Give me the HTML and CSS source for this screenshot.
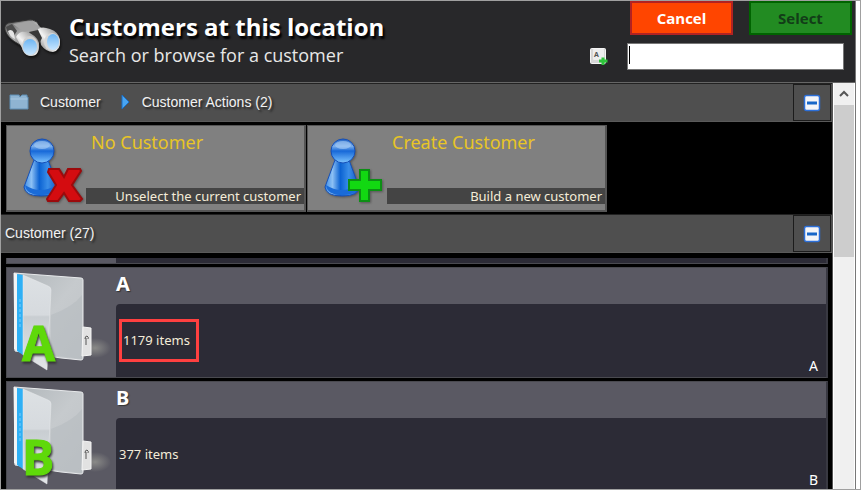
FILE: index.html
```html
<!DOCTYPE html>
<html lang="en">
<head>
    <meta charset="UTF-8">
    <meta name="viewport" content="width=device-width, initial-scale=1.0">
    <title>Customers at this location</title>
    <link rel="stylesheet" href="styles.css">
</head>
<body>
    <!-- Shared gradients and shapes -->
    <svg class="defs" width="0" height="0" aria-hidden="true">
        <defs>
            <linearGradient id="metal" x1="0" y1="0" x2="1" y2="1">
                <stop offset="0" stop-color="#555"/>
                <stop offset="0.5" stop-color="#b0b0b0"/>
                <stop offset="1" stop-color="#5c5c5c"/>
            </linearGradient>
            <linearGradient id="barrel" x1="0" y1="1" x2="1" y2="0">
                <stop offset="0" stop-color="#666"/>
                <stop offset="0.45" stop-color="#f4f4f4"/>
                <stop offset="1" stop-color="#777"/>
            </linearGradient>
            <linearGradient id="lens" x1="0" y1="0" x2="0" y2="1">
                <stop offset="0" stop-color="#6db5f2"/>
                <stop offset="1" stop-color="#c8e6ff"/>
            </linearGradient>
            <linearGradient id="pawnBody" x1="0" y1="0" x2="1" y2="0">
                <stop offset="0" stop-color="#3f8ee6"/>
                <stop offset="0.22" stop-color="#8cc0f4"/>
                <stop offset="0.45" stop-color="#0b62d2"/>
                <stop offset="0.7" stop-color="#3a8ee8"/>
                <stop offset="1" stop-color="#1453c0"/>
            </linearGradient>
            <linearGradient id="pawnHead" x1="0" y1="0" x2="0" y2="1">
                <stop offset="0" stop-color="#1f62c4"/>
                <stop offset="0.3" stop-color="#7db0ec"/>
                <stop offset="0.5" stop-color="#1668d8"/>
                <stop offset="1" stop-color="#7cc4ff"/>
            </linearGradient>
            <linearGradient id="folderBack" x1="0" y1="0" x2="1" y2="1">
                <stop offset="0" stop-color="#b0b6ba"/>
                <stop offset="0.5" stop-color="#c6cacd"/>
                <stop offset="1" stop-color="#bfc3c7"/>
            </linearGradient>
            <linearGradient id="folderFront" x1="0" y1="0" x2="0" y2="1">
                <stop offset="0" stop-color="#dde1e4"/>
                <stop offset="0.42" stop-color="#d6dade"/>
                <stop offset="0.44" stop-color="#c9ced2"/>
                <stop offset="1" stop-color="#e2e5e8"/>
            </linearGradient>
            <radialGradient id="folderShade">
                <stop offset="0" stop-color="#8a8a88"/>
                <stop offset="1" stop-color="#8a8a88" stop-opacity="0"/>
            </radialGradient>
            <symbol id="pawn" viewBox="0 0 64 72">
                <path d="M14 29 H28 L38 56 Q38 65 21 65 Q5 65 4 56 Z" fill="url(#pawnBody)" stroke="#1650b8"/>
                <path d="M5 54 Q20 64 37 54 Q37 64 21 64 Q6 64 5 54" fill="#1a6bd8"/>
                <circle cx="22" cy="20" r="12" fill="url(#pawnHead)" stroke="#1650b8"/>
                <ellipse cx="22" cy="14" rx="8" ry="4" fill="#a9cdf5" opacity="0.6"/>
            </symbol>
            <symbol id="folder" viewBox="0 0 104 108">
                <ellipse cx="88" cy="79" rx="16" ry="10" fill="url(#folderShade)"/>
                <path d="M7 4 L74 9 Q76 9 76 11 V89 Q76 91 74 91 L54 89 L8 82 Z" fill="url(#folderBack)" stroke="#e8eaec"/>
                <path d="M44 46 Q66 38 75 26 V90 L44 86 Z" fill="#b4b9bd" opacity="0.5"/>
                <path d="M76 58 L84 59 V86 L75 87 Z" fill="#e2e2e2" stroke="#f5f5f5"/>
                <path d="M78 70 Q78 67 80 67 Q82 68 81 70 M79 69 V76" fill="none" stroke="#555"/>
                <path d="M7 4 L11 5 V83 L7 80 Z" fill="#f2f4f5"/>
                <path d="M10 5 L16 6 V86 L10 82 Z" fill="#2fb0f5"/>
                <path d="M13 30 V58" stroke="#7cccfb" stroke-dasharray="3 2"/>
                <path d="M16 6 L41 17 Q44 18 44 21 L40 101 L16 86 Z" fill="url(#folderFront)" stroke="#e9ebed" stroke-width="0.500"/>
            </symbol>
            <symbol id="minus" viewBox="0 0 18 18">
                <rect x="1.5" y="1.5" width="15" height="15" rx="2" fill="#f4f5f8" stroke="#2c6fd8" stroke-width="1.5"/>
                <rect x="4" y="7.5" width="10" height="3" fill="#1766c8"/>
            </symbol>
        </defs>
    </svg>

    <div class="window">
        <div class="app">
            <header class="header">
                <svg class="logo" viewBox="0 0 60 42" aria-hidden="true">
                    <path d="M1 12 Q0 7 4 5 L24 2 Q29 1 33 4 L38 12 L16 27 Q3 20 1 12 Z" fill="url(#metal)" stroke="#333"/>
                    <path d="M9 6 L26 3 L38 10 L20 14 Z" fill="#a2a2a2"/>
                    <path d="M2 9 L8 6 L13 13 L9 19 Q3 15 2 9 Z" fill="#4a4a4a"/>
                    <path d="M4 13 Q8 10 10 15 L11 21 Q5 18 4 13 Z" fill="#e5e5e5"/>
                    <path d="M34 11 Q38 8 46 11 Q55 14 56 22 Q57 32 49 34 Q42 34 37 27 Z" fill="url(#barrel)"/>
                    <path d="M25 14 L34 12 L38 20 L35 26 Z" fill="#383838"/>
                    <path d="M12 19 Q15 13 22 14 Q33 17 35 25 Q36 38 27 38 Q20 37 18 30 Z" fill="url(#barrel)"/>
                    <ellipse cx="48" cy="24" rx="8" ry="9" fill="#d8d8d8"/>
                    <ellipse cx="49" cy="24" rx="6" ry="8" fill="url(#lens)"/>
                    <ellipse cx="26" cy="28" rx="8" ry="10" fill="#d0d0d0"/>
                    <ellipse cx="26" cy="29" rx="7" ry="8" fill="url(#lens)"/>
                </svg>
                <div class="heading">
                    <h1>Customers at this location</h1>
                    <p>Search or browse for a customer</p>
                </div>
                <div class="tools">
                    <div class="buttons">
                        <button class="btn btn-cancel" type="button">Cancel</button>
                        <button class="btn btn-select" type="button">Select</button>
                    </div>
                    <div class="search">
                        <button class="key" type="button" aria-label="Keyboard">
                            <svg viewBox="0 0 18 18">
                                <rect x="0.5" y="0.5" width="15" height="15" rx="1" fill="#d6d6d6" stroke="#f4f4f4"/>
                                <rect x="3" y="1" width="11" height="11" rx="1" fill="#eee"/>
                                <text x="4" y="9" font-size="7" font-weight="bold" fill="#555">A</text>
                                <path d="M11.5 9.5 h3 v2 h3 v3 h-3 v2.5 h-3 v-2.5 h-2.5 v-3 h2.5 Z" fill="#2fc53c"/>
                            </svg>
                        </button>
                        <input type="text" aria-label="Search customers">
                    </div>
                </div>
            </header>

            <div class="content">
                <main class="main">
                    <div class="bar">
                        <nav class="crumbs">
                            <svg class="crumb-folder" viewBox="0 0 20 16" aria-hidden="true">
                                <path d="M1 1 H10 L11 3 L13 1 H18 V3 H19 V15 H1 Z" fill="#8fb4d2" stroke="#5f8fb5"/>
                                <path d="M1.5 5 H18.5" stroke="#a9c8e0"/>
                            </svg>
                            <a href="#">Customer</a>
                            <svg class="crumb-arrow" viewBox="0 0 9 16" aria-hidden="true">
                                <path d="M1 1 L8 8 L1 15 Z" fill="#49a5f2" stroke="#1b6fc4"/>
                            </svg>
                            <a href="#">Customer Actions (2)</a>
                        </nav>
                        <button class="toggle" type="button" aria-label="Collapse actions"><svg><use href="#minus"/></svg></button>
                    </div>

                    <div class="actions">
                        <button class="action" type="button">
                            <svg viewBox="0 0 64 72" aria-hidden="true">
                                <use href="#pawn"/>
                                <path d="M29 38 H39 L44 46 L48 38 H60 L61 40 L52 54 L62 68 L60 70 H49 L44 62 L38 70 H28 L27 68 L36 54 L28 41 Z" fill="#d40c10" stroke="#9c0a0c" stroke-width="2"/>
                            </svg>
                            <span class="action-title">No Customer</span>
                            <span class="action-note">Unselect the current customer</span>
                        </button>
                        <button class="action" type="button">
                            <svg viewBox="0 0 64 72" aria-hidden="true">
                                <use href="#pawn"/>
                                <path d="M39 39 H48 V49 H60 V59 H48 V70 H39 V59 H28 V49 H39 Z" fill="#12d812" stroke="#0c8f14" stroke-width="2"/>
                            </svg>
                            <span class="action-title">Create Customer</span>
                            <span class="action-note">Build a new customer</span>
                        </button>
                    </div>

                    <div class="bar">
                        <h2>Customer (27)</h2>
                        <button class="toggle" type="button" aria-label="Collapse customers"><svg><use href="#minus"/></svg></button>
                    </div>

                    <div class="list">
                        <div class="card card-tail"><div class="card-body"></div></div>
                        <article class="card">
                            <svg class="card-icon" viewBox="0 0 104 108" aria-hidden="true">
                                <use href="#folder"/>
                                <text class="letter" x="15" y="92">A</text>
                            </svg>
                            <h3>A</h3>
                            <div class="card-body">
                                <span class="count highlight">1179 items</span>
                                <span class="initial">A</span>
                            </div>
                        </article>
                        <article class="card">
                            <svg class="card-icon" viewBox="0 0 104 108" aria-hidden="true">
                                <use href="#folder"/>
                                <text class="letter" x="15" y="92">B</text>
                            </svg>
                            <h3>B</h3>
                            <div class="card-body">
                                <span class="count">377 items</span>
                                <span class="initial">B</span>
                            </div>
                        </article>
                    </div>
                </main>

                <div class="scrollbar">
                    <button class="scroll-up" type="button" aria-label="Scroll up">
                        <svg viewBox="0 0 10 8"><path d="M1 6 L5 2 L9 6" fill="none" stroke="#555" stroke-width="2"/></svg>
                    </button>
                    <div class="thumb"></div>
                </div>
            </div>
        </div>
    </div>
</body>
</html>
```

FILE: styles.css
```css
* {
    box-sizing: border-box;
}
body {
    margin: 0;
    font-family: "Noto Sans", sans-serif;
    color: #fff;
}
h1, h2, h3, p {
    margin: 0;
    font-weight: normal;
}
button {
    padding: 0;
    border: 0;
    font-family: inherit;
    color: inherit;
}
svg {
    display: block;
}
.defs {
    position: absolute;
}
.window {
    height: 100vh;
    padding-right: 4px;
    border: 1px solid #a0a0a0;
    background: #fff;
}
.app {
    display: flex;
    flex-direction: column;
    height: 100%;
    border-right: 1px solid #777;
    background: #28282a;
    overflow: hidden;
}

/* Header */
.header {
    display: flex;
    flex: none;
    align-items: flex-start;
    height: 81px;
    padding: 0 3px;
}
.logo {
    width: 60px;
    height: 42px;
    margin-top: 17px;
    filter: drop-shadow(1px 2px 1px #111);
}
.heading {
    flex: 1;
    padding: 10px 0 0 5px;
    white-space: nowrap;
}
h1 {
    font-family: "Open Sans", sans-serif;
    font-size: 24px;
    line-height: 32px;
    font-weight: bold;
    text-shadow: 2px 3px 2px #000;
}
.heading p {
    font-family: "Open Sans", sans-serif;
    font-size: 18px;
    line-height: 24px;
    color: #e8e8e8;
}
.tools {
    display: flex;
    flex-direction: column;
    align-items: flex-end;
}
.buttons {
    display: flex;
    gap: 16px;
}
.btn {
    width: 103px;
    height: 34px;
    border: 2px solid #b22222;
    font-family: "Open Sans", sans-serif;
    font-size: 15px;
    font-weight: bold;
}
.btn-cancel {
    background: #ff4500;
}
.btn-select {
    border-color: #006400;
    background: #228b22;
    color: #123d18;
}
.search {
    display: flex;
    align-items: center;
    gap: 19px;
    margin: 8px 8px 0 0;
}
.key {
    background: none;
}
.key svg {
    width: 18px;
    height: 18px;
}
/* The bar at the left is the resting text cursor */
.search input {
    width: 217px;
    height: 27px;
    padding: 0 4px;
    border: 1px solid #777;
    outline: 0;
    background: #fff linear-gradient(#000, #000) 1px 2px / 1px 18px no-repeat;
    color: #000;
    font-size: 16px;
}
.search input:focus {
    background: #fff;
}

/* Content and scrollbar */
.content {
    display: flex;
    flex: 1;
    min-height: 0;
    border-top: 1px solid #666;
}
.main {
    display: flex;
    flex: 1;
    flex-direction: column;
    min-width: 0;
    border-right: 1px solid #555;
    background: #000;
}
.scrollbar {
    width: 22px;
    border: solid #fff;
    border-width: 0 1px;
    background: #f0f0f0;
}
.scroll-up {
    display: flex;
    align-items: center;
    justify-content: center;
    width: 100%;
    height: 22px;
    background: #f0f0f0;
}
.scroll-up svg {
    width: 10px;
    height: 8px;
}
.thumb {
    height: 152px;
    background: #cdcdcd;
}

/* Section bars */
.bar {
    display: flex;
    flex: none;
    align-items: center;
    justify-content: space-between;
    height: 39px;
    padding-right: 1px;
    border-top: 1px solid #222;
    border-bottom: 1px solid #5a5a5a;
    background: #4f4f4f;
    font-family: "Liberation Sans", Arial, sans-serif;
    font-size: 14px;
    text-shadow: 2px 2px 2px #222;
}
.crumbs {
    display: flex;
    align-items: center;
    padding: 0 0 2px 8px;
}
.crumbs a {
    color: #f2f2f2;
    text-decoration: none;
}
.crumb-folder {
    width: 20px;
    height: 16px;
    margin-right: 11px;
}
.crumb-arrow {
    width: 9px;
    height: 16px;
    margin: 0 12px 0 20px;
}
.bar h2 {
    padding: 0 0 2px 4px;
    font-size: 14px;
    color: #f2f2f2;
}
.toggle {
    display: flex;
    align-items: center;
    justify-content: center;
    width: 38px;
    height: 37px;
    border: 1px solid #1c1c1c;
    background: #4f4f4f;
}
.toggle svg {
    width: 18px;
    height: 18px;
}

/* Action tiles */
.actions {
    display: flex;
    gap: 1px;
    padding: 3px 5px 2px;
}
.action {
    display: grid;
    grid-template-columns: 79px 1fr;
    grid-template-rows: 62px 16px;
    width: 300px;
    height: 87px;
    border: 1px solid #555;
    border-right-width: 2px;
    border-bottom-width: 2px;
    background: #808080;
}
.action svg {
    grid-row: 1 / 3;
    width: 64px;
    height: 72px;
    margin: 5px 0 0 13px;
    filter: drop-shadow(1px 1px 1px #555);
}
.action-title {
    padding: 3px 0 0 5px;
    font-size: 18px;
    line-height: 26px;
    text-align: left;
    color: #e8c526;
}
.action-note {
    padding-right: 3px;
    background: #444;
    font-size: 13px;
    line-height: 16px;
    text-align: right;
    color: #f4ecd8;
}

/* Customer list */
.list {
    display: flex;
    flex: 1;
    flex-direction: column;
    gap: 3px;
    min-height: 0;
    padding: 5px 4px 0 5px;
    overflow: hidden;
}
.card {
    display: grid;
    flex: none;
    grid-template-columns: 109px 1fr;
    grid-template-rows: 36px 73px;
    border: 1px solid #4a4a50;
    border-right: 2px solid #393942;
    background: #5a5963;
}
.card-tail {
    grid-template-rows: 5px;
    border-top: 0;
}
.card-tail .card-body {
    border-radius: 0;
}
.card-icon {
    grid-row: 1 / 3;
    width: 104px;
    height: 108px;
    margin-top: 1px;
}
.letter {
    font-family: "Open Sans", sans-serif;
    font-size: 48px;
    line-height: 48px;
    font-weight: bold;
    fill: #5fd90a;
    stroke: #5fd90a;
    filter: drop-shadow(1px 2px 1px #333);
}
.card h3 {
    font-size: 20px;
    font-weight: bold;
    line-height: 32px;
    text-shadow: 1px 1px 1px #333;
}
.card-body {
    display: flex;
    grid-column: 2;
    align-items: center;
    justify-content: space-between;
    padding: 0 8px 0 3px;
    border-radius: 4px 0 0 0;
    background: #2c2b36;
    font-size: 13px;
    line-height: 19px;
    color: #f4ecd8;
}
.highlight {
    padding: 9px 6px 9px 1px;
    border: 3px solid #ff4040;
}
.initial {
    align-self: flex-end;
    padding-bottom: 2px;
    font-size: 14px;
    color: #fff;
}
```
